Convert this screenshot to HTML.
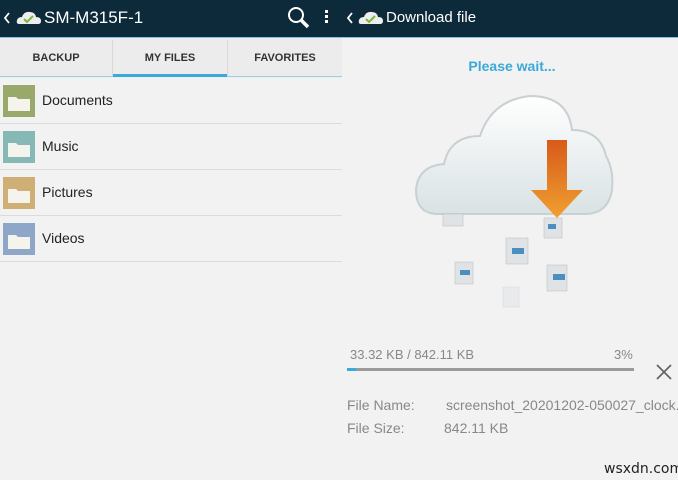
<!DOCTYPE html>
<html><head><meta charset="utf-8"><style>
*{margin:0;padding:0;box-sizing:border-box}
body{width:678px;height:480px;overflow:hidden;background:#f2f2f2;font-family:"Liberation Sans",sans-serif;position:relative}
.a{position:absolute}
.bar{background:#0d2a3a;height:37px;top:0}
.t{color:#fff;font-size:16px;top:9px}
.tab{top:38px;height:40px;background:#ececec;font-size:11px;font-weight:bold;color:#333;text-align:center;line-height:40px}
.row{left:0;width:342px;height:46px;border-bottom:1px solid #dcdcdc}
.row span{position:absolute;left:42px;top:14px;font-size:14px;color:#222}
.fold{position:absolute;left:3px;top:7px;width:32px;height:32px}
.g{color:#888;font-size:13px}
</style></head><body>
<div class="a bar" style="left:0;width:342px"></div>
<div class="a bar" style="left:342px;width:336px"></div>
<div class="a" style="left:0;top:37px;width:678px;height:1px;background:#7fc3e0"></div>
<svg class="a" style="left:3px;top:12px" width="8" height="12"><path d="M6 1L2 6l4 5" stroke="#fff" stroke-width="1.8" fill="none"/></svg>
<svg class="a" style="left:16px;top:9px" width="26" height="16" viewBox="0 0 26 16"><path d="M3 15 Q0 15 1 11 Q2 8 6 8 Q8 2 14 3 Q19 3 20 8 Q25 8 25 12 Q25 15 22 15Z" fill="#eee"/><path d="M8 10 l3 3 l6-6" stroke="#7ab83a" stroke-width="2" fill="none"/></svg>
<div class="a t" style="left:44px;font-size:17px;top:8px">SM-M315F-1</div>
<svg class="a" style="left:286px;top:5px" width="26" height="26" viewBox="0 0 26 26"><circle cx="10" cy="10" r="7" stroke="#fff" stroke-width="2" fill="none"/><path d="M15 15 L22 22" stroke="#fff" stroke-width="3.5"/></svg>
<div class="a" style="left:325px;top:10px;width:3px;height:3px;background:#fff;box-shadow:0 5px #fff,0 10px #fff"></div>
<svg class="a" style="left:346px;top:12px" width="8" height="12"><path d="M6 1L2 6l4 5" stroke="#fff" stroke-width="1.8" fill="none"/></svg>
<svg class="a" style="left:358px;top:9px" width="26" height="16" viewBox="0 0 26 16"><path d="M3 15 Q0 15 1 11 Q2 8 6 8 Q8 2 14 3 Q19 3 20 8 Q25 8 25 12 Q25 15 22 15Z" fill="#eee"/><path d="M8 10 l3 3 l6-6" stroke="#7ab83a" stroke-width="2" fill="none"/></svg>
<div class="a t" style="left:386px;font-size:15px">Download file</div>

<div class="a tab" style="left:0;width:112px">BACKUP</div>
<div class="a tab" style="left:113px;width:114px">MY FILES</div>
<div class="a tab" style="left:228px;width:114px">FAVORITES</div>
<div class="a" style="left:112px;top:40px;width:1px;height:36px;background:#d8d8d8"></div>
<div class="a" style="left:227px;top:40px;width:1px;height:36px;background:#d8d8d8"></div>
<div class="a" style="left:0;top:76px;width:342px;height:1px;background:#9dd0e6"></div>
<div class="a" style="left:113px;top:74px;width:114px;height:3px;background:#3aaad8"></div>

<div class="a row" style="top:78px"><div class="fold" style="background:#98a96a"></div><svg class="a" style="left:7px;top:16px" width="26" height="18"><path d="M1 3h8l2 2h12v12H1z" fill="#f4f4ec"/></svg><span>Documents</span></div>
<div class="a row" style="top:124px"><div class="fold" style="background:#86b9b6"></div><svg class="a" style="left:7px;top:16px" width="26" height="18"><path d="M1 3h8l2 2h12v12H1z" fill="#f4f4ec"/></svg><span>Music</span></div>
<div class="a row" style="top:170px"><div class="fold" style="background:#cfaf76"></div><svg class="a" style="left:7px;top:16px" width="26" height="18"><path d="M1 3h8l2 2h12v12H1z" fill="#f4f4ec"/></svg><span>Pictures</span></div>
<div class="a row" style="top:216px"><div class="fold" style="background:#8ea6c8"></div><svg class="a" style="left:7px;top:16px" width="26" height="18"><path d="M1 3h8l2 2h12v12H1z" fill="#f4f4ec"/></svg><span>Videos</span></div>

<div class="a" style="left:342px;top:58px;width:340px;text-align:center;color:#3aaad8;font-weight:bold;font-size:14px">Please wait...</div>
<svg class="a" style="left:410px;top:90px" width="210" height="235" viewBox="0 0 210 235">
<defs><linearGradient id="c" x1="0" y1="0" x2="0" y2="1"><stop offset="0" stop-color="#fff"/><stop offset="1" stop-color="#d9e2e4"/></linearGradient>
<linearGradient id="o" x1="0" y1="0" x2="0" y2="1"><stop offset="0" stop-color="#d85a1a"/><stop offset="1" stop-color="#f0a030"/></linearGradient></defs>
<path d="M25 124 Q6 122 6 100 Q8 76 34 74 Q40 46 70 46 Q82 10 120 6 Q158 6 162 40 Q190 40 196 66 Q204 80 202 100 Q198 124 175 124 Z" fill="url(#c)" stroke="#c8d0d2" stroke-width="2"/>
<path d="M137 50h20v50h16l-26 28-26-28h16z" fill="url(#o)"/>
<g fill="#dfe3e6" stroke="#bbb" stroke-width=".5"><rect x="33" y="124" width="20" height="12"/><rect x="134" y="128" width="18" height="20"/><rect x="96" y="148" width="22" height="26"/><rect x="45" y="172" width="18" height="22"/><rect x="137" y="175" width="20" height="26"/><rect x="93" y="197" width="16" height="20" opacity=".5"/></g>
<g fill="#4a8fc0"><rect x="138" y="134" width="8" height="5"/><rect x="102" y="158" width="12" height="6"/><rect x="50" y="180" width="10" height="5"/><rect x="143" y="184" width="12" height="6"/></g>
</svg>

<div class="a g" style="left:350px;top:347px">33.32 KB / 842.11 KB</div>
<div class="a g" style="left:614px;top:347px">3%</div>
<div class="a" style="left:347px;top:368px;width:287px;height:3px;background:#9a9a9a"></div>
<div class="a" style="left:347px;top:368px;width:9px;height:3px;background:#3aaad8"></div>
<svg class="a" style="left:655px;top:363px" width="18" height="18"><path d="M2 2L16 16M16 2L2 16" stroke="#666" stroke-width="1.8"/></svg>
<div class="a g" style="left:347px;top:397px;font-size:14px">File Name:</div>
<div class="a g" style="left:446px;top:397px;font-size:14px;white-space:nowrap">screenshot_20201202-050027_clock.jp</div>
<div class="a g" style="left:347px;top:420px;font-size:14px">File Size:</div>
<div class="a g" style="left:444px;top:420px;font-size:14px">842.11 KB</div>
<div class="a" style="left:604px;top:461px;font-size:14px;color:#222;font-family:'DejaVu Sans',sans-serif">wsxdn.com</div>
</body></html>
